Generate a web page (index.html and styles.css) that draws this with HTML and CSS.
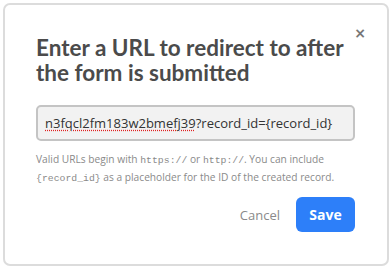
FILE: index.html
```html
<!DOCTYPE html>
<html>
<head>
<meta charset="utf-8">
<link rel="stylesheet" href="styles.css">
</head>
<body>
<div class="modal">
  <button class="close" aria-label="Close">&times;</button>
  <h1 class="title">Enter a URL to redirect to after the form is submitted</h1>
  <div class="field"><span class="misspelled">n3fqcl2fm183w2bmefj39</span>?record_id={record_id}</div>
  <p class="help">Valid URLs begin with <code>https://</code> or <code>http://</code>. You can include <code>{record_id}</code> as a placeholder for the ID of the created record.</p>
  <div class="actions">
    <button class="cancel">Cancel</button>
    <button class="save">Save</button>
  </div>
</div>
</body>
</html>
```
FILE: styles.css
```css
html, body {
  margin: 0;
  padding: 0;
  background: #ffffff;
}
body {
  padding: 3px;
  width: 392px;
  height: 269px;
  box-sizing: border-box;
  overflow: hidden;
}
.modal {
  position: relative;
  width: 386px;
  height: 263px;
  box-sizing: border-box;
  border: 2px solid #dcdcdc;
  border-radius: 7px;
  background: #fff;
  padding: 30px 32px 0 31px;
  font-family: "Open Sans", sans-serif;
}
.close {
  position: absolute;
  top: 21px;
  right: 21px;
  border: 0;
  background: none;
  padding: 0;
  font-family: "DejaVu Sans", sans-serif;
  font-size: 14px;
  font-weight: bold;
  color: #777;
  line-height: 1;
}
.title {
  margin: 0;
  font-family: Lato, sans-serif;
  font-weight: 700;
  font-size: 22.5px;
  line-height: 25px;
  color: #4b4b4b;
  padding-right: 10px;
}
.field {
  margin-top: 20px;
  height: 36px;
  box-sizing: border-box;
  border: 2px solid #c4c4c4;
  border-radius: 5px;
  background: #f2f2f2;
  padding: 0 0 0 7px;
  display: flex;
  align-items: center;
  font-size: 13px;
  color: #333;
  white-space: nowrap;
  overflow: hidden;
}
.misspelled {
  text-decoration: underline dotted #e02020;
  text-underline-offset: 2px;
}
.help {
  margin: 9px 0 0;
  font-size: 10.2px;
  line-height: 18px;
  color: #8a8a8a;
}
.help code {
  font-family: "Liberation Mono", monospace;
  font-size: 9.8px;
  line-height: 1;
  color: #8a8a8a;
}
.actions {
  margin-top: 11px;
  display: flex;
  justify-content: flex-end;
  align-items: center;
  gap: 16px;
}
.cancel {
  border: 0;
  background: none;
  padding: 0;
  font-family: "Open Sans", sans-serif;
  font-size: 13px;
  color: #8a8a8a;
}
.save {
  width: 59px;
  height: 35px;
  border: 0;
  border-radius: 6px;
  background: #2d7ff9;
  color: #fff;
  font-family: "Open Sans", sans-serif;
  font-weight: 700;
  font-size: 14px;
}
```
